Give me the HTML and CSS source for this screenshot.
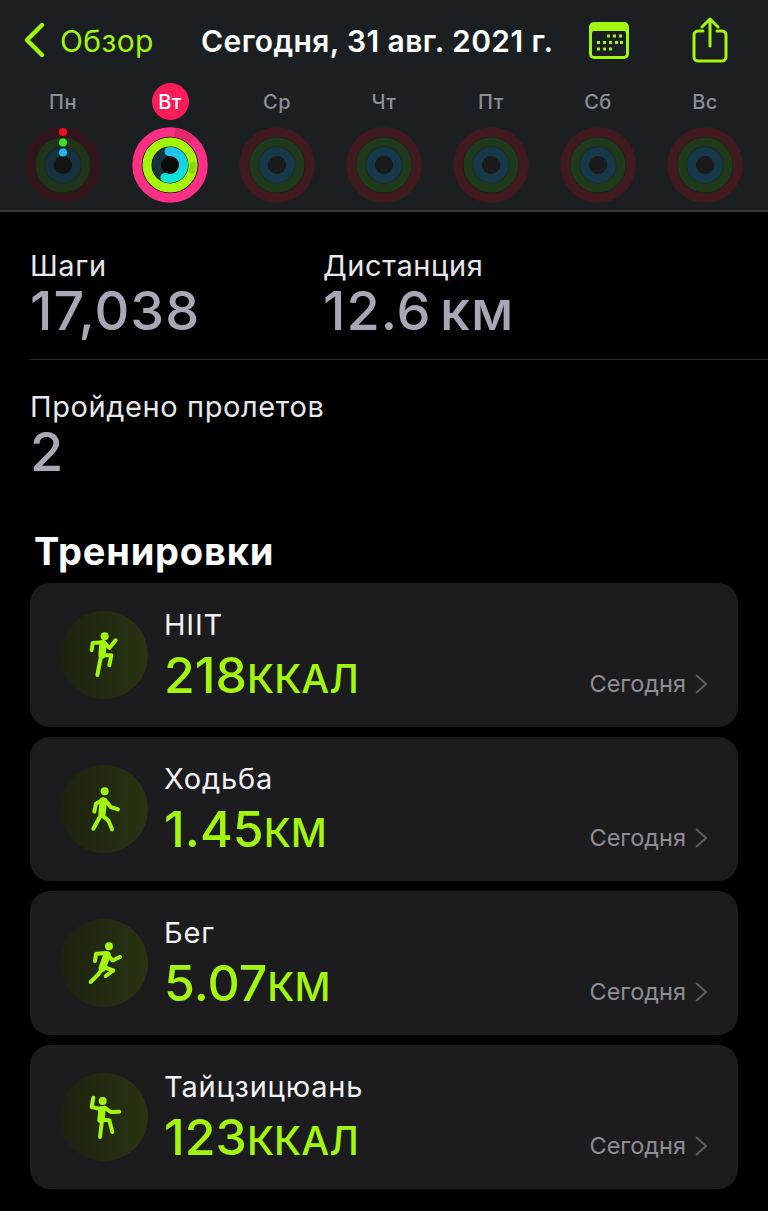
FILE: index.html
```html
<!DOCTYPE html>
<html lang="ru">
<head>
    <meta charset="UTF-8">
    <meta name="viewport" content="width=device-width, initial-scale=1.0">
    <title>Сегодня, 31 авг. 2021 г.</title>
    <link rel="stylesheet" href="styles.css">
</head>
<body>
    <svg class="defs" width="0" height="0">
        <linearGradient id="moveArc" x1="0" y1="0" x2="0" y2="1">
            <stop offset="0" stop-color="#1cc4ea"/>
            <stop offset="1" stop-color="#0be6da"/>
        </linearGradient>
        <symbol id="ringOff" viewBox="0 0 76 76">
            <circle cx="38" cy="38" r="33" fill="none" stroke="#401a1f" stroke-width="9.5"/>
            <circle cx="38" cy="38" r="23" fill="none" stroke="#1f3a1a" stroke-width="9"/>
            <circle cx="38" cy="38" r="13.5" fill="none" stroke="#163848" stroke-width="9"/>
            <circle cx="38" cy="38" r="9" fill="#1a1b1c"/>
        </symbol>
    </svg>

    <!-- Top bar and week -->
    <header class="top">
        <nav class="nav">
            <a class="back">
                <svg class="back-icon" width="24" height="38" viewBox="0 0 24 38"><polyline points="20,4 5,19 20,34" fill="none" stroke="#a3f60d" stroke-width="4.4" stroke-linecap="round" stroke-linejoin="round"/></svg>
                <span>Обзор</span>
            </a>
            <div class="title">Сегодня, 31 авг. 2021 г.</div>
            <svg class="calendar" width="40" height="38" viewBox="0 0 40 38">
                <rect x="0" y="0" width="40" height="37" rx="5" fill="#a3f60d"/>
                <rect x="3" y="9" width="34" height="25" rx="2" fill="#1c1f21"/>
                <g fill="#a3f60d">
                    <rect x="18" y="12.5" width="3" height="3"/><rect x="24" y="12.5" width="3" height="3"/><rect x="30" y="12.5" width="3" height="3"/>
                    <rect x="8" y="19" width="3" height="3"/><rect x="14" y="19" width="3" height="3"/><rect x="20" y="19" width="3" height="3"/><rect x="26" y="19" width="3" height="3"/><rect x="31" y="19" width="3" height="3"/>
                    <rect x="8" y="25.5" width="3" height="3"/><rect x="14" y="25.5" width="3" height="3"/><rect x="20" y="25.5" width="3" height="3"/>
                </g>
            </svg>
            <svg class="share" width="36" height="46" viewBox="0 0 36 46" fill="none" stroke="#a3f60d" stroke-width="3" stroke-linecap="round" stroke-linejoin="round">
                <path d="M11 14H6a4 4 0 0 0-4 4v22a4 4 0 0 0 4 4h24a4 4 0 0 0 4-4V18a4 4 0 0 0-4-4h-5"/>
                <path d="M18 29V2M10 10l8-8 8 8"/>
            </svg>
        </nav>
        <div class="week">
            <div class="day">
                <span class="day-name">Пн</span>
                <svg class="ring" width="76" height="76" viewBox="0 0 76 76">
                    <circle cx="38" cy="38" r="33" fill="none" stroke="#32151a" stroke-width="9.5"/>
                    <circle cx="38" cy="38" r="23" fill="none" stroke="#1e3318" stroke-width="9"/>
                    <circle cx="38" cy="38" r="13.5" fill="none" stroke="#16303d" stroke-width="9"/>
                    <circle cx="38" cy="38" r="9" fill="#121415"/>
                    <circle cx="38" cy="5" r="4" fill="#ee0e1e"/>
                    <circle cx="38" cy="15.5" r="4" fill="#3fe01c"/>
                    <circle cx="38" cy="25.5" r="4" fill="#1db9ea"/>
                </svg>
            </div>
            <div class="day">
                <span class="day-name day-today">Вт</span>
                <svg class="ring" width="76" height="76" viewBox="0 0 76 76">
                    <circle cx="38" cy="38" r="28.5" fill="#0b0b0b"/>
                    <circle cx="38" cy="38" r="33" fill="none" stroke="#fb2f86" stroke-width="9.5"/>
                    <path d="M43 5.4A33 33 0 0 1 60 13.5" fill="none" stroke="#e3296c" stroke-width="9.5"/>
                    <circle cx="38" cy="38" r="23" fill="none" stroke="#a6f60c" stroke-width="9"/>
                    <path d="M61 38A23 23 0 0 1 60 44" fill="none" stroke="#8fd40a" stroke-width="6" stroke-linecap="round"/>
                    <circle cx="38" cy="38" r="13.5" fill="none" stroke="#18323e" stroke-width="9"/>
                    <path d="M37 24.5A13.5 13.5 0 1 1 33 50.5" fill="none" stroke="url(#moveArc)" stroke-width="9" stroke-linecap="round"/>
                </svg>
            </div>
            <div class="day"><span class="day-name">Ср</span><svg class="ring" width="76" height="76"><use href="#ringOff"/></svg></div>
            <div class="day"><span class="day-name">Чт</span><svg class="ring" width="76" height="76"><use href="#ringOff"/></svg></div>
            <div class="day"><span class="day-name">Пт</span><svg class="ring" width="76" height="76"><use href="#ringOff"/></svg></div>
            <div class="day"><span class="day-name">Сб</span><svg class="ring" width="76" height="76"><use href="#ringOff"/></svg></div>
            <div class="day"><span class="day-name">Вс</span><svg class="ring" width="76" height="76"><use href="#ringOff"/></svg></div>
        </div>
    </header>

    <!-- Steps, distance, flights -->
    <section class="stats">
        <div class="stats-row">
            <div class="stat stat-steps">
                <div class="stat-label">Шаги</div>
                <div class="stat-value">17,038</div>
            </div>
            <div class="stat">
                <div class="stat-label">Дистанция</div>
                <div class="stat-value stat-unit">12.6 км</div>
            </div>
        </div>
        <div class="stat stat-flights">
            <div class="stat-label">Пройдено пролетов</div>
            <div class="stat-value">2</div>
        </div>
    </section>

    <!-- Workouts -->
    <h2 class="section-title">Тренировки</h2>
    <div class="cards">
        <div class="card">
            <div class="badge">
                <svg class="figure" width="88" height="88" viewBox="60 62 264 264">
                    <circle class="fig-head" cx="194" cy="138" r="12"/>
                    <path class="fig-line" d="M155 180L158 158L192 156L208 173L227 150M186 195H214L208 225M183 198L172 254"/>
                    <path class="fig-body" d="M189 160L186 194"/>
                </svg>
            </div>
            <div class="card-main">
                <div class="card-name">HIIT</div>
                <div class="card-value">218<small>ККАЛ</small></div>
            </div>
            <div class="card-when">Сегодня <svg width="14" height="22" viewBox="0 0 14 22"><polyline points="2,2 12,11 2,20" fill="none" stroke="#5e5e62" stroke-width="2"/></svg></div>
        </div>
        <div class="card">
            <div class="badge">
                <svg class="figure" width="88" height="88" viewBox="60 44 264 264">
                    <circle class="fig-head" cx="194" cy="123" r="12"/>
                    <path class="fig-line" d="M188 148L168 160L163 184M196 150L212 170L234 177M184 192L160 235M186 195L205 210L216 237"/>
                    <path class="fig-body" d="M190 152L186 190"/>
                </svg>
            </div>
            <div class="card-main">
                <div class="card-name">Ходьба</div>
                <div class="card-value">1.45<small>КМ</small></div>
            </div>
            <div class="card-when">Сегодня <svg width="14" height="22" viewBox="0 0 14 22"><polyline points="2,2 12,11 2,20" fill="none" stroke="#5e5e62" stroke-width="2"/></svg></div>
        </div>
        <div class="card">
            <div class="badge">
                <svg class="figure" width="88" height="88" viewBox="60 41 264 264">
                    <circle class="fig-head" cx="207" cy="123" r="12"/>
                    <path class="fig-line" d="M198 143L168 145L165 167M204 150L218 165L240 155M186 190L176 206L152 230M190 185L220 195L197 212"/>
                    <path class="fig-body" d="M201 148L187 188"/>
                </svg>
            </div>
            <div class="card-main">
                <div class="card-name">Бег</div>
                <div class="card-value">5.07<small>КМ</small></div>
            </div>
            <div class="card-when">Сегодня <svg width="14" height="22" viewBox="0 0 14 22"><polyline points="2,2 12,11 2,20" fill="none" stroke="#5e5e62" stroke-width="2"/></svg></div>
        </div>
        <div class="card">
            <div class="badge">
                <svg class="figure" width="88" height="88" viewBox="60 38 264 264">
                    <circle class="fig-head" cx="188" cy="122" r="12"/>
                    <path class="fig-line" d="M182 146L155 140L160 112M194 142L212 155L238 154M186 180L180 230M186 178L208 180L217 215"/>
                    <path class="fig-body" d="M186 148L183 178"/>
                </svg>
            </div>
            <div class="card-main">
                <div class="card-name">Тайцзицюань</div>
                <div class="card-value">123<small>ККАЛ</small></div>
            </div>
            <div class="card-when">Сегодня <svg width="14" height="22" viewBox="0 0 14 22"><polyline points="2,2 12,11 2,20" fill="none" stroke="#5e5e62" stroke-width="2"/></svg></div>
        </div>
    </div>
</body>
</html>
```

FILE: styles.css
```css
* {
    box-sizing: border-box;
}

body {
    font-family: Inter, "Noto Sans", sans-serif;
    margin: 0;
    padding: 0;
    width: 768px;
    height: 1211px;
    overflow: hidden;
    background-color: #000;
    color: #fff;
}

.defs {
    position: absolute;
}

.top {
    height: 212px;
    background-color: #1c1f21;
    border-bottom: 2px solid #37393b;
}

.nav {
    height: 80px;
    display: flex;
    align-items: center;
    padding-left: 22px;
}

.back {
    display: flex;
    align-items: center;
    width: 179px;
    color: #a3f60d;
    font-size: 30px;
    line-height: 38px;
    letter-spacing: 0.4px;
    gap: 14px;
}

.back span {
    padding-top: 2px;
}

.title {
    width: 388px;
    padding-top: 2px;
    font-size: 30px;
    font-weight: 600;
    letter-spacing: 0.4px;
    white-space: nowrap;
}

.calendar {
    margin-top: 1px;
}

.share {
    margin-left: 63px;
    margin-top: -1px;
}

.week {
    display: flex;
    padding-left: 9.5px;
}

.day {
    width: 107px;
    display: flex;
    flex-direction: column;
    align-items: center;
}

.day-name {
    width: 37px;
    height: 37px;
    margin-top: 3px;
    line-height: 39px;
    text-align: center;
    font-size: 20px;
    font-weight: 500;
    letter-spacing: 0.5px;
    color: #8e8e93;
}

.day-today {
    background-color: #fa1d5a;
    border-radius: 50%;
    color: #fff;
}

.ring {
    margin-top: 7px;
}

.stats {
    padding-top: 37px;
}

.stats-row {
    display: flex;
    margin-left: 30px;
    height: 111px;
    border-bottom: 1px solid #2a2a2c;
}

.stat-steps {
    width: 293px;
}

.stat-flights {
    margin: 30px 0 0 30px;
}

.stat-label {
    font-size: 29px;
    line-height: 34px;
    letter-spacing: 0.6px;
    color: #e8e8ea;
}

.stat-value {
    margin-top: 1px;
    font-size: 54px;
    line-height: 54px;
    font-weight: 500;
    letter-spacing: 1px;
    color: #a6a9b5;
}

.stat-unit {
    word-spacing: -7px;
}

.section-title {
    margin: 50px 0 10px 34px;
    font-size: 38px;
    line-height: 44px;
    font-weight: 700;
    letter-spacing: 0.8px;
}

.cards {
    display: flex;
    flex-direction: column;
    gap: 10px;
    margin: 0 30px;
}

.card {
    height: 144px;
    display: flex;
    align-items: center;
    padding: 0 30px;
    border-radius: 20px;
    background-color: #1c1c1e;
}

.badge {
    width: 88px;
    height: 88px;
    border-radius: 50%;
    background: linear-gradient(90deg, #1b2210, #293412);
}

.figure {
    display: block;
}

.fig-head {
    fill: #a3f60d;
}

.fig-line {
    fill: none;
    stroke: #a3f60d;
    stroke-width: 12;
    stroke-linecap: round;
    stroke-linejoin: round;
}

.fig-body {
    fill: none;
    stroke: #a3f60d;
    stroke-width: 22;
    stroke-linecap: round;
}

.card-main {
    flex: 1;
    align-self: flex-start;
    margin-left: 16px;
    padding-top: 25px;
}

.card-name {
    font-size: 29px;
    line-height: 34px;
    letter-spacing: 0.8px;
    color: #f2f2f4;
}

.card-value {
    margin-top: 5px;
    font-size: 50px;
    line-height: 56px;
    font-weight: 500;
    color: #a3f60d;
}

.card-value small {
    font-size: 39.5px;
}

.card-when {
    align-self: flex-end;
    display: flex;
    align-items: center;
    gap: 8px;
    padding-bottom: 29px;
    font-size: 23.5px;
    line-height: 28px;
    color: #8e8e93;
}
```
